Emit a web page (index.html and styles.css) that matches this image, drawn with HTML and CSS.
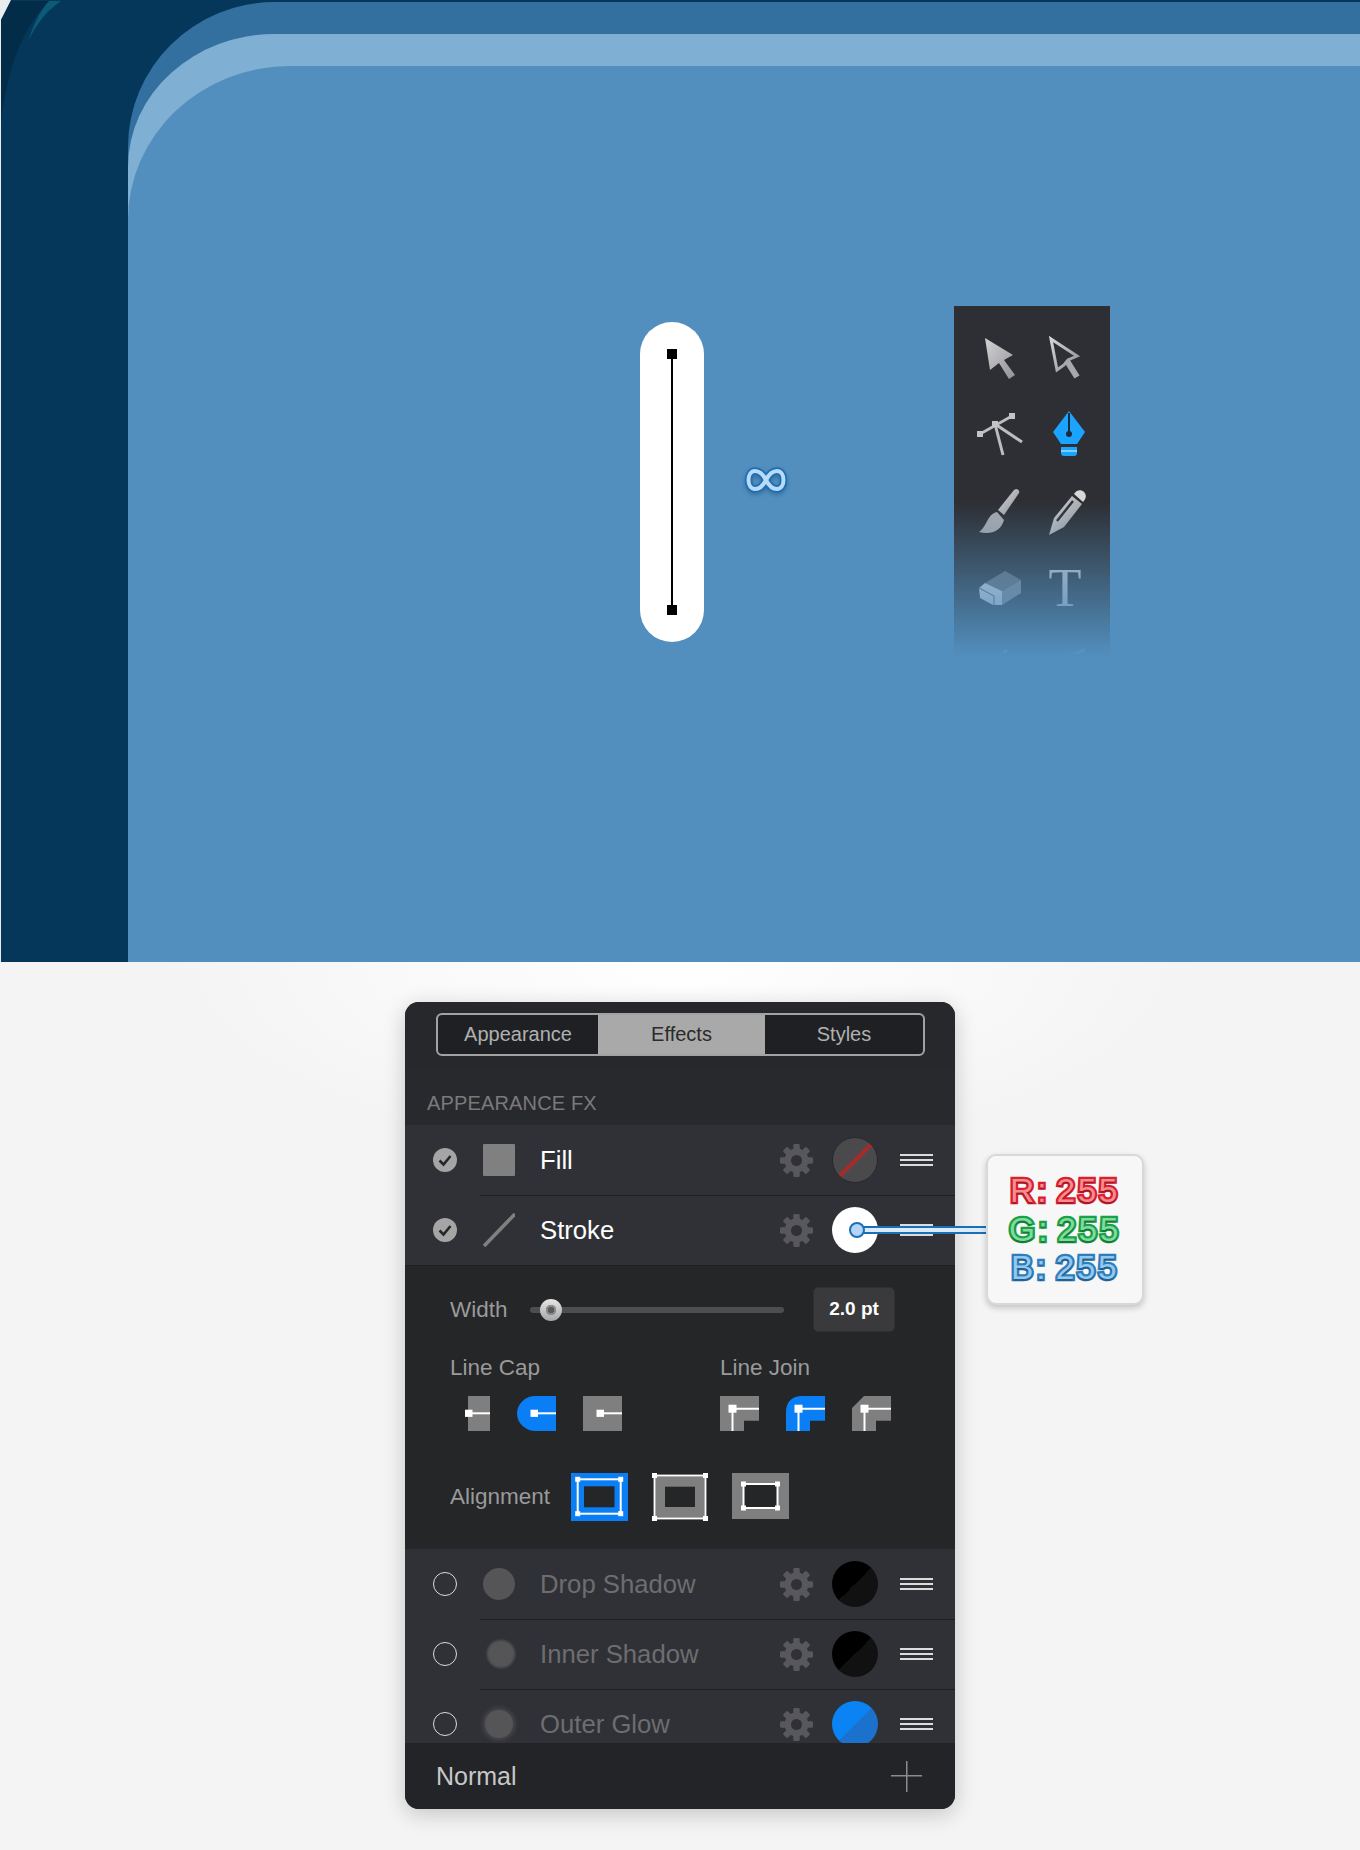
FILE: index.html
```html
<!DOCTYPE html>
<html lang="en">
<head>
    <meta charset="UTF-8">
    <meta name="viewport" content="width=device-width, initial-scale=1.0">
    <title>Stroke settings</title>
    <link rel="stylesheet" href="styles.css">
</head>
<body>
    <svg class="defs" width="0" height="0">
        <symbol id="gear" viewBox="0 0 36 36">
            <g fill="currentColor">
                <rect x="14.5" y="0" width="7" height="36" rx="1.5"/>
                <rect x="14.5" y="0" width="7" height="36" rx="1.5" transform="rotate(45 18 18)"/>
                <rect x="14.5" y="0" width="7" height="36" rx="1.5" transform="rotate(90 18 18)"/>
                <rect x="14.5" y="0" width="7" height="36" rx="1.5" transform="rotate(135 18 18)"/>
                <circle cx="18" cy="18" r="13"/>
            </g>
            <circle cx="18" cy="18" r="6" fill="#303136"/>
        </symbol>
        <symbol id="check" viewBox="0 0 24 24">
            <polyline points="6.5,12.5 10.5,16.5 17.5,8" fill="none" stroke="#26272a" stroke-width="2.6"/>
        </symbol>
        <linearGradient id="metal" x1="0" y1="0" x2="1" y2="1">
            <stop offset="0" stop-color="#d4d4d6"/>
            <stop offset="1" stop-color="#929296"/>
        </linearGradient>
    </svg>

    <section class="hero">
        <svg class="hero-corner" width="64" height="124" viewBox="0 0 64 124">
            <path d="M0 0H10L0 20Z" fill="#e9edf0"/>
            <path d="M0 124V20L10 1H48C20 30 6 70 0 124Z" fill="#032c48"/>
            <path d="M48 1H60C44 12 34 26 27 42C32 26 38 12 48 1Z" fill="#0d5a77"/>
        </svg>
        <div class="cover">
            <div class="cover-band">
                <div class="cover-face">
                    <div class="pill">
                        <span class="pill-end"></span>
                        <span class="pill-line"></span>
                        <span class="pill-end"></span>
                    </div>
                    <svg class="infinity" width="46" height="34" viewBox="0 0 46 34">
                        <path d="M23 17C20 11 16 8 12 8C8 8 5.500 12 5.500 17C5.500 22 8 26 12 26C16 26 20 23 23 17C26 11 30 8 34 8C38 8 40.500 12 40.500 17C40.500 22 38 26 34 26C30 26 26 23 23 17Z" fill="none" stroke="#1a6fb5" stroke-width="7.5"/>
                        <path d="M23 17C20 11 16 8 12 8C8 8 5.500 12 5.500 17C5.500 22 8 26 12 26C16 26 20 23 23 17C26 11 30 8 34 8C38 8 40.500 12 40.500 17C40.500 22 38 26 34 26C30 26 26 23 23 17Z" fill="none" stroke="#b9daf8" stroke-width="4"/>
                    </svg>
                    <div class="toolbox">
                        <div class="toolbox-grid">
                            <svg class="tool" viewBox="0 0 60 60">
                                <polygon points="18,10 46,27 37,32 48,47 42,51 32,35 23,42" fill="url(#metal)"/>
                            </svg>
                            <svg class="tool" viewBox="0 0 60 60">
                                <path d="M16 11L42 28L33 32L29 37L22 42Z" fill="#2e2f34" stroke="url(#metal)" stroke-width="3"/>
                                <line x1="32" y1="33" x2="42" y2="49" stroke="#a8a8ac" stroke-width="6"/>
                            </svg>
                            <svg class="tool tool-up" viewBox="0 0 60 60">
                                <g stroke="#bdbdc0" fill="none">
                                    <line x1="13" y1="31" x2="45" y2="13" stroke-width="2.8"/>
                                    <line x1="28" y1="21" x2="36" y2="52" stroke-width="3"/>
                                    <line x1="28" y1="21" x2="55" y2="39" stroke-width="3"/>
                                </g>
                                <rect x="10" y="28" width="6" height="6" fill="#c4c4c6"/>
                                <rect x="25" y="18" width="6" height="6" fill="#c4c4c6"/>
                                <rect x="42" y="10" width="6" height="6" fill="#c4c4c6"/>
                            </svg>
                            <svg class="tool tool-up" viewBox="0 0 60 60">
                                <polygon points="34,8 50,29 42,41 26,41 18,29" fill="#1aa4ff"/>
                                <line x1="34" y1="10" x2="34" y2="30" stroke="#1d2a3a" stroke-width="2"/>
                                <circle cx="34" cy="31" r="3" fill="#1d2a3a"/>
                                <path d="M26 44H42V50C42 52 41 53 39 53H29C27 53 26 52 26 50Z" fill="#1aa4ff"/>
                                <rect x="26" y="47" width="16" height="2" fill="#7fd0ff"/>
                            </svg>
                            <svg class="tool" viewBox="0 0 60 60">
                                <path d="M49 8C51 8 53 10 52 12L37 34L31 29L47 9Z" fill="url(#metal)"/>
                                <path d="M30 31C20 33 20 46 12 51C24 54 34 50 37 39Z" fill="#a8a8ac"/>
                            </svg>
                            <svg class="tool" viewBox="0 0 60 60">
                                <path d="M14 54L19 37L37 15L47 23L29 46Z" fill="url(#metal)"/>
                                <path d="M22 40L38 20" stroke="#2e2f34" stroke-width="2.4"/>
                                <path d="M39 13C41 9 46 8 49 11C52 14 51 18 48 21Z" fill="#d8d8da"/>
                            </svg>
                            <svg class="tool" viewBox="0 0 60 60">
                                <polygon points="38,13 54,22 35,33 18,25" fill="#6a6a6e"/>
                                <polygon points="12,30 18,25 35,33 35,47 26,47 13,40" fill="#d8d8dc"/>
                                <polygon points="35,33 54,22 54,35 35,47" fill="#85858a"/>
                                <path d="M12 30L27 38V47" fill="none" stroke="#6a6a6e" stroke-width="1.200"/>
                            </svg>
                            <span class="tool tool-text">T</span>
                            <svg class="tool" viewBox="0 0 60 60">
                                <line x1="40" y1="16" x2="30" y2="26" stroke="#fff" stroke-width="3.500"/>
                            </svg>
                            <svg class="tool" viewBox="0 0 60 60">
                                <line x1="50" y1="16" x2="30" y2="24" stroke="#fff" stroke-width="3.500"/>
                            </svg>
                        </div>
                    </div>
                </div>
            </div>
        </div>
    </section>

    <main class="lower">
        <div class="panel-wrap">
            <div class="panel">
                <div class="panel-head">
                    <div class="tabs">
                        <span class="tab tab-first">Appearance</span>
                        <span class="tab tab-on">Effects</span>
                        <span class="tab tab-last">Styles</span>
                    </div>
                </div>
                <div class="section-title">APPEARANCE FX</div>

                <div class="row">
                    <span class="toggle toggle-on"><svg width="24" height="24"><use href="#check"/></svg></span>
                    <span class="row-icon"><span class="fill-square"></span></span>
                    <span class="row-name">Fill</span>
                    <svg class="gear"><use href="#gear"/></svg>
                    <span class="swatch swatch-none"></span>
                    <span class="handle"></span>
                </div>
                <div class="row">
                    <span class="toggle toggle-on"><svg width="24" height="24"><use href="#check"/></svg></span>
                    <span class="row-icon">
                        <svg width="32" height="34" viewBox="0 0 32 34"><line x1="1" y1="33" x2="32" y2="1" stroke="#808080" stroke-width="3.6"/></svg>
                    </span>
                    <span class="row-name">Stroke</span>
                    <svg class="gear"><use href="#gear"/></svg>
                    <span class="swatch swatch-white"></span>
                    <span class="handle"></span>
                </div>

                <div class="settings">
                    <div class="width-row">
                        <span class="label width-label">Width</span>
                        <div class="track"><span class="thumb"></span></div>
                        <span class="value">2.0 pt</span>
                    </div>
                    <div class="line-opts">
                        <div class="opt-cap">
                            <div class="label">Line Cap</div>
                            <div class="opt-icons opt-icons-cap">
                                <svg width="25" height="35" viewBox="0 0 25 35">
                                    <rect x="3" width="22" height="35" fill="#7f7f7f"/>
                                    <rect x="4" y="16.300" width="21" height="2" fill="#fff"/>
                                    <rect y="13.700" width="7.500" height="7.200" fill="#fff"/>
                                </svg>
                                <svg width="39" height="35" viewBox="0 0 39 35">
                                    <path d="M39 0H18.500A18.500 17.500 0 0 0 18.500 35H39Z" fill="#0a7ef5"/>
                                    <rect x="17" y="16.300" width="22" height="2" fill="#fff"/>
                                    <rect x="13.500" y="13.700" width="7.500" height="7.200" fill="#fff"/>
                                </svg>
                                <svg width="39" height="35" viewBox="0 0 39 35">
                                    <rect width="39" height="35" fill="#7f7f7f"/>
                                    <rect x="17" y="16.300" width="22" height="2" fill="#fff"/>
                                    <rect x="13.500" y="13.700" width="7.500" height="7.200" fill="#fff"/>
                                </svg>
                            </div>
                        </div>
                        <div class="opt-join">
                            <div class="label">Line Join</div>
                            <div class="opt-icons">
                                <svg width="39" height="35" viewBox="0 0 39 35">
                                    <polygon points="0,0 39,0 39,24.700 24,24.700 24,35 0,35" fill="#7f7f7f"/>
                                    <path d="M39 12.700H12.500V35" fill="none" stroke="#fff" stroke-width="2"/>
                                    <rect x="8.500" y="8.700" width="8" height="8" fill="#fff"/>
                                </svg>
                                <svg width="39" height="35" viewBox="0 0 39 35">
                                    <path d="M0 35V16C0 6 6 0 16 0H39V24.700H24V35Z" fill="#0a7ef5"/>
                                    <path d="M39 12.700H12.500V35" fill="none" stroke="#fff" stroke-width="2"/>
                                    <rect x="8.500" y="8.700" width="8" height="8" fill="#fff"/>
                                </svg>
                                <svg width="39" height="35" viewBox="0 0 39 35">
                                    <polygon points="0,12 12,0 39,0 39,24.700 24,24.700 24,35 0,35" fill="#7f7f7f"/>
                                    <path d="M39 12.700H12.500V35" fill="none" stroke="#fff" stroke-width="2"/>
                                    <rect x="8.500" y="8.700" width="8" height="8" fill="#fff"/>
                                </svg>
                            </div>
                        </div>
                    </div>
                    <div class="align-row">
                        <span class="label align-label">Alignment</span>
                        <svg width="57" height="48" viewBox="0 0 57 48">
                            <rect width="57" height="48" fill="#0a7ef5"/>
                            <rect x="13" y="13.300" width="30.500" height="21" fill="#252628"/>
                            <rect x="6.700" y="6.300" width="43" height="34.400" fill="none" stroke="#fff" stroke-width="2"/>
                            <g fill="#fff"><rect x="4.200" y="3.800" width="5" height="5"/><rect x="47.200" y="3.800" width="5" height="5"/><rect x="4.200" y="38.200" width="5" height="5"/><rect x="47.200" y="38.200" width="5" height="5"/></g>
                        </svg>
                        <svg width="56" height="48" viewBox="0 0 56 48">
                            <rect x="2.500" y="2.500" width="51" height="43" fill="#7f7f7f"/>
                            <rect x="13" y="13.700" width="30" height="20.300" fill="#252628"/>
                            <rect x="2.500" y="2.500" width="51" height="43" fill="none" stroke="#fff" stroke-width="1.800"/>
                            <g fill="#fff"><rect width="5" height="5"/><rect x="51" width="5" height="5"/><rect y="43" width="5" height="5"/><rect x="51" y="43" width="5" height="5"/></g>
                        </svg>
                        <svg width="57" height="46" viewBox="0 0 57 46">
                            <rect width="57" height="46" fill="#7f7f7f"/>
                            <rect x="11.500" y="11" width="34" height="24" fill="#252628" stroke="#fff" stroke-width="2"/>
                            <g fill="#fff"><rect x="9" y="8.500" width="5" height="5"/><rect x="43" y="8.500" width="5" height="5"/><rect x="9" y="32.500" width="5" height="5"/><rect x="43" y="32.500" width="5" height="5"/></g>
                        </svg>
                    </div>
                </div>

                <div class="row row-off">
                    <span class="toggle"></span>
                    <span class="row-icon"><span class="blob"></span></span>
                    <span class="row-name">Drop Shadow</span>
                    <svg class="gear"><use href="#gear"/></svg>
                    <span class="swatch swatch-black"></span>
                    <span class="handle"></span>
                </div>
                <div class="row row-off">
                    <span class="toggle"></span>
                    <span class="row-icon"><span class="blob blob-inner"></span></span>
                    <span class="row-name">Inner Shadow</span>
                    <svg class="gear"><use href="#gear"/></svg>
                    <span class="swatch swatch-black"></span>
                    <span class="handle"></span>
                </div>
                <div class="row-clip">
                    <div class="row row-off">
                        <span class="toggle"></span>
                        <span class="row-icon"><span class="blob blob-glow"></span></span>
                        <span class="row-name">Outer Glow</span>
                        <svg class="gear"><use href="#gear"/></svg>
                        <span class="swatch swatch-blue"></span>
                        <span class="handle"></span>
                    </div>
                </div>

                <div class="panel-foot">
                    <span class="foot-name">Normal</span>
                    <span class="plus"></span>
                </div>
            </div>

            <!-- callout pointing at the stroke swatch -->
            <span class="link-line"></span>
            <span class="link-dot"></span>
            <div class="rgb-card">
                <div class="rgb-line rgb-r"><span class="rgb-key">R:</span><span>255</span></div>
                <div class="rgb-line rgb-g"><span class="rgb-key">G:</span><span>255</span></div>
                <div class="rgb-line rgb-b"><span class="rgb-key">B:</span><span>255</span></div>
            </div>
        </div>
    </main>
</body>
</html>
```

FILE: styles.css
```css
* {
    box-sizing: border-box;
}
body {
    margin: 0;
    background-color: #f4f4f4;
    font-family: "Liberation Sans", Arial, sans-serif;
}
.defs {
    position: absolute;
}

/* top picture */
.hero {
    position: relative;
    height: 962px;
    padding-top: 2px;
    border-left: 1px solid #e9edf0;
    background-color: #04375a;
    display: flex;
    flex-direction: column;
}
.hero-corner {
    position: absolute;
    left: 0;
    top: 0;
}
.cover {
    flex: 1;
    margin-left: 127px;
    padding-top: 32px;
    background-color: #33709f;
    border-top-left-radius: 147px 145px;
    display: flex;
    flex-direction: column;
}
.cover-band {
    flex: 1;
    padding-top: 32px;
    background-color: #7fb0d3;
    border-top-left-radius: 147px 133px;
    display: flex;
    flex-direction: column;
}
.cover-face {
    flex: 1;
    padding: 240px 0 0 512px;
    background-color: #528fbe;
    border-top-left-radius: 162px 154px;
    display: flex;
    align-items: flex-start;
}
.pill {
    width: 64px;
    height: 320px;
    margin-top: 16px;
    padding: 27px 0;
    background-color: #fff;
    border-radius: 32px;
    display: flex;
    flex-direction: column;
    align-items: center;
}
.pill-end {
    width: 10px;
    height: 10px;
    background-color: #000;
}
.pill-line {
    flex: 1;
    width: 2px;
    background-color: #000;
}
.infinity {
    margin: 157px 0 0 39px;
    filter: drop-shadow(0 2px 2px rgba(20, 70, 110, .45));
}
.toolbox {
    width: 156px;
    height: 350px;
    margin-left: 165px;
    padding: 14px 0 0 9px;
    background-color: #2e2f34;
    -webkit-mask-image: linear-gradient(#000 56%, transparent 100%);
    mask-image: linear-gradient(#000 56%, transparent 100%);
}
.toolbox-grid {
    display: grid;
    grid-template-columns: 68px 68px;
    grid-auto-rows: 76.500px;
    justify-items: center;
    align-items: center;
}
.tool {
    width: 60px;
    height: 60px;
}
.tool-up {
    margin-bottom: 3px;
}
.tool-text {
    color: #c4c4c8;
    font-family: "Liberation Serif", serif;
    font-size: 54px;
    line-height: 60px;
    text-align: center;
}

/* lower part */
.lower {
    padding: 40px 0 41px;
    background: radial-gradient(ellipse 520px 200px at 50% 0, #fff, #f4f4f4);
    display: flex;
    justify-content: center;
}
.panel-wrap {
    position: relative;
    width: 550px;
}
.panel {
    background-color: #252628;
    border-radius: 14px;
    overflow: hidden;
    box-shadow: 0 5px 22px rgba(0, 0, 0, .2);
}
.panel-head {
    height: 67px;
    padding: 11px 30px 0 31px;
    background-color: #27282c;
}
.tabs {
    height: 43px;
    background-color: #1f2023;
    border: 2px solid #a2a2a2;
    border-radius: 6px;
    display: flex;
    overflow: hidden;
}
.tab {
    color: #b0b0b0;
    font-size: 20px;
    line-height: 39px;
    text-align: center;
}
.tab-first {
    width: 160px;
}
.tab-on {
    width: 167px;
    background-color: #a9a9a9;
    color: #2b2b2b;
}
.tab-last {
    flex: 1;
}
.section-title {
    height: 56px;
    padding: 22px 0 0 22px;
    background-color: #28292d;
    color: #7a7a7c;
    font-size: 20px;
    line-height: 24px;
    letter-spacing: .15px;
}

.row {
    height: 70px;
    padding: 0 22px 0 28px;
    background-color: #303136;
    color: #fff;
    display: flex;
    align-items: center;
}
.row + .row,
.row-clip .row {
    background: linear-gradient(#1f2023, #1f2023) 75px 0 / 100% 1px no-repeat #303136;
}
.row-off {
    color: #6d6d70;
}
.row-clip {
    height: 54px;
    overflow: hidden;
}
.toggle {
    flex: none;
    width: 24px;
    height: 24px;
    border: 1.5px solid #dcdcdc;
    border-radius: 50%;
}
.toggle-on {
    border: 0;
    background-color: #a5a5a5;
}
.toggle svg {
    display: block;
}
.row-icon {
    flex: none;
    width: 32px;
    margin-left: 26px;
    display: flex;
    justify-content: center;
}
.fill-square {
    width: 32px;
    height: 32px;
    background-color: #808080;
    border-radius: 1px;
}
.blob {
    width: 32px;
    height: 32px;
    background-color: #555558;
    border-radius: 50%;
}
.blob-inner {
    width: 28px;
    height: 28px;
    margin-left: 3px;
    filter: blur(1px);
}
.blob-glow {
    width: 28px;
    height: 28px;
    box-shadow: 0 0 5px 2px #4a4a4e;
}
.row-name {
    flex: 1;
    margin-left: 25px;
    font-size: 25.700px;
}
.gear {
    flex: none;
    width: 33px;
    height: 33px;
    color: #58585c;
}
.swatch {
    flex: none;
    width: 46px;
    height: 46px;
    margin: 0 22px 0 19px;
    border-radius: 50%;
}
.swatch-none {
    background: linear-gradient(135deg, transparent 47%, #a52a2a 47%, #a52a2a 54%, transparent 54%) #4a4a4d;
    border: 1px solid #28282a;
}
.swatch-white {
    background-color: #fff;
}
.swatch-black {
    background: linear-gradient(135deg, #000 50%, #111112 50%);
}
.swatch-blue {
    background: linear-gradient(135deg, #0a84f5 50%, #1a72cc 50%);
}
.handle {
    flex: none;
    width: 33px;
    height: 12px;
    background: repeating-linear-gradient(#dcdcdc 0, #dcdcdc 2px, transparent 2px, transparent 5px);
}

/* stroke settings */
.settings {
    height: 284px;
    padding: 21px 0 0 45px;
    border-top: 1px solid #1f2023;
    background-color: #252628;
}
.label {
    color: #9a9a9a;
    font-size: 22.500px;
    line-height: 26px;
}
.width-row {
    display: flex;
    align-items: center;
}
.width-label {
    width: 80px;
}
.track {
    width: 254px;
    height: 6px;
    padding-left: 10px;
    background-color: #4e4e50;
    border-radius: 3px;
    display: flex;
    align-items: center;
}
.thumb {
    flex: none;
    width: 22px;
    height: 22px;
    border-radius: 50%;
    background: radial-gradient(circle, #5a5a5a 0 3.500px, #8a8a8a 3.500px 5px, transparent 5.500px), linear-gradient(#e6e6e6, #a6a6a6);
}
.value {
    width: 82px;
    height: 45px;
    margin-left: 29px;
    background-color: #3a3a3c;
    border: 1px solid #303032;
    border-radius: 5px;
    color: #fff;
    font-size: 19px;
    font-weight: bold;
    line-height: 41px;
    text-align: center;
}
.line-opts {
    margin-top: 23px;
    display: flex;
}
.opt-cap {
    width: 270px;
}
.opt-icons {
    margin-top: 15px;
    display: flex;
    gap: 27px;
}
.opt-icons svg,
.align-row svg {
    display: block;
}
.opt-icons-cap {
    padding-left: 15px;
}
.align-row {
    margin-top: 42px;
    display: flex;
    align-items: flex-start;
    gap: 24px;
}
.align-label {
    width: 97px;
    margin-top: 11px;
}

.panel-foot {
    height: 66px;
    padding: 0 33px 0 31px;
    background-color: #232427;
    display: flex;
    align-items: center;
    justify-content: space-between;
}
.foot-name {
    color: #c8c8c8;
    font-size: 25px;
}
.plus {
    width: 31px;
    height: 31px;
    background: linear-gradient(#8b8b8b, #8b8b8b) center / 100% 1.500px no-repeat, linear-gradient(#8b8b8b, #8b8b8b) center / 1.500px 100% no-repeat;
}

/* callout */
.link-line {
    position: absolute;
    left: 452px;
    top: 224px;
    width: 130px;
    height: 8px;
    background-color: #dcebfb;
    border-top: 2px solid #1b6fb5;
    border-bottom: 2px solid #1b6fb5;
}
.link-dot {
    position: absolute;
    left: 444px;
    top: 220px;
    width: 16px;
    height: 16px;
    background-color: #b5d4f7;
    border: 2px solid #1b6fb5;
    border-radius: 50%;
}
.rgb-card {
    position: absolute;
    left: 581px;
    top: 152px;
    width: 158px;
    height: 151px;
    padding-top: 16px;
    background-color: #f7f7f7;
    border: 2px solid #d8d8d8;
    border-radius: 10px;
    box-shadow: 0 3px 6px rgba(0, 0, 0, .2);
}
.rgb-line {
    height: 38.500px;
    font-size: 33.500px;
    line-height: 38px;
    letter-spacing: 2.500px;
    paint-order: stroke fill;
    -webkit-text-stroke: 4.500px var(--edge);
    color: var(--face);
    display: flex;
    justify-content: center;
    gap: 7px;
    text-shadow: 0 2px 1px rgba(0, 0, 0, .25);
}
.rgb-r {
    --edge: #d9202f;
    --face: #f98a90;
}
.rgb-g {
    --edge: #1ba049;
    --face: #7edc9d;
}
.rgb-b {
    --edge: #2f7dbb;
    --face: #92c9f0;
}
.rgb-key {
    letter-spacing: 3px;
}
```
